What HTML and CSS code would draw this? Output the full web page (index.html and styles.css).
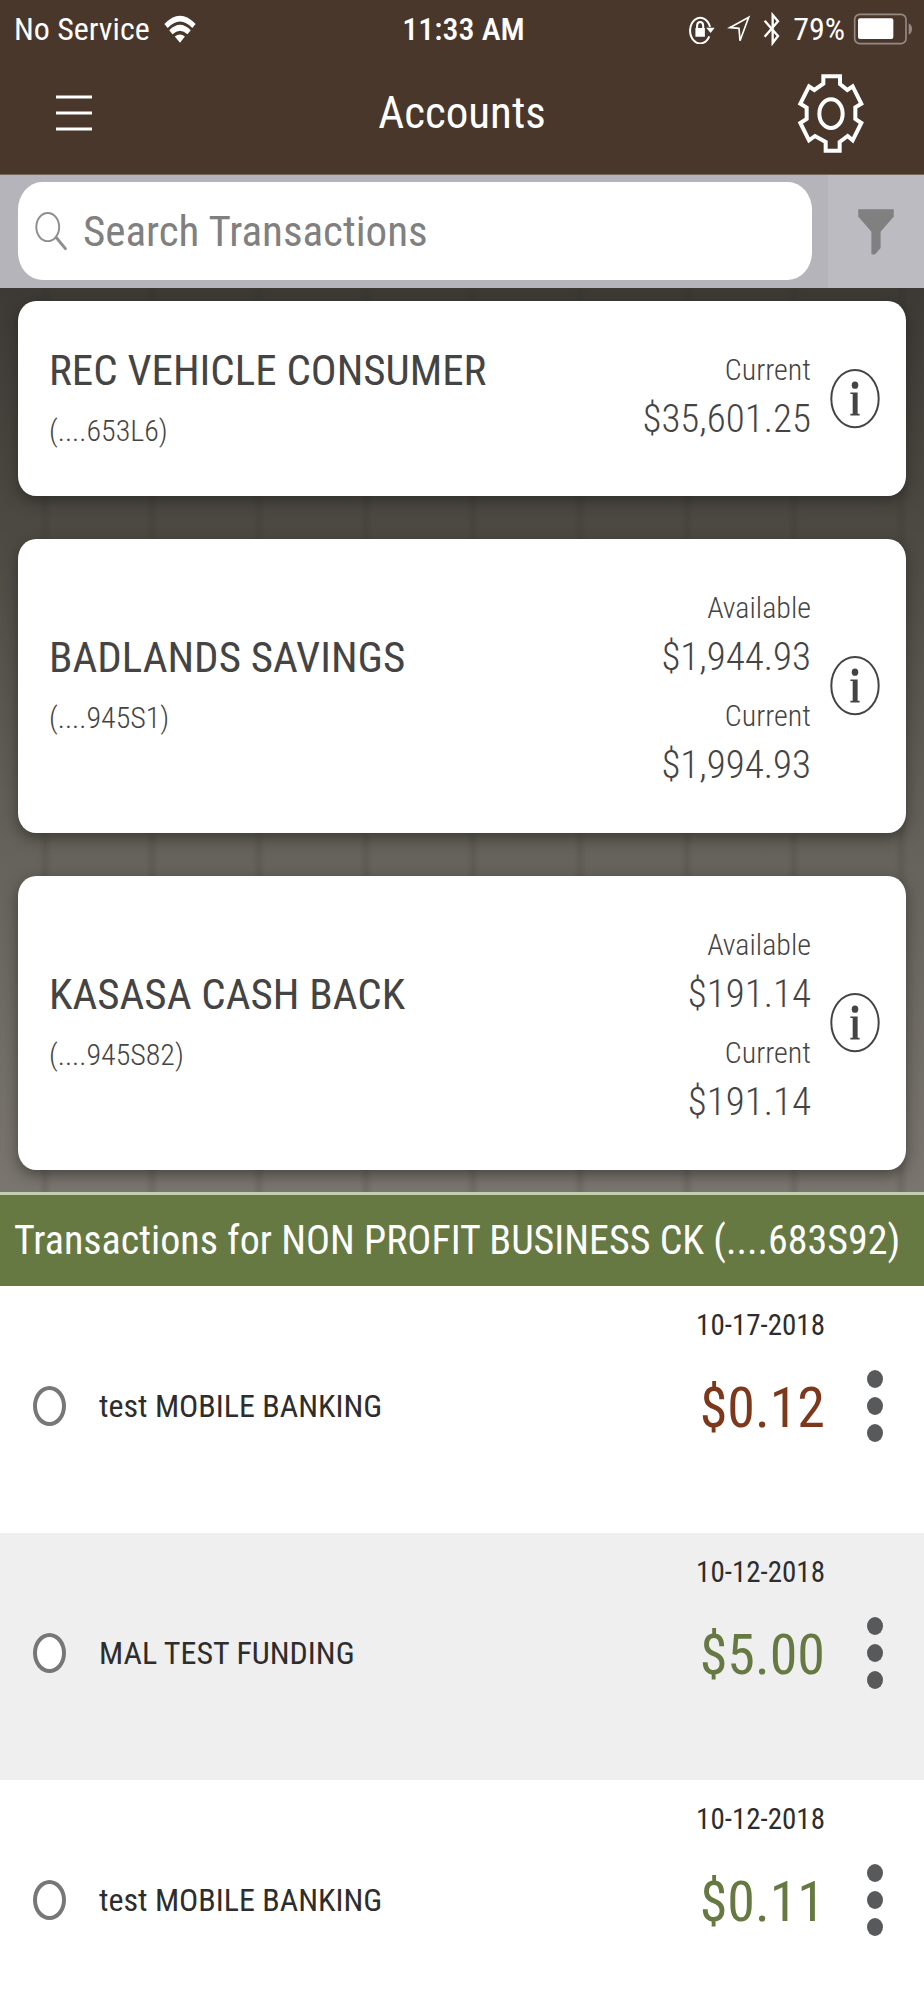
FILE: index.html
```html
<!DOCTYPE html>
<html lang="en">
<head>
<meta charset="utf-8">
<meta name="viewport" content="width=device-width, initial-scale=1">
<title>Accounts</title>
<link rel="stylesheet" href="styles.css">
</head>
<body>
<div class="app">
  <header class="top">
    <div class="status">
      <div class="status-left">
        <span>No Service</span>
        <svg class="wifi" viewBox="487 38 98 86" aria-hidden="true"><path fill="#fff" d="M488 66Q536 14 584 66L574 78Q536 38 498 78ZM503 85Q536 51 569 85L559 97Q536 75 513 97ZM520 104Q536 92 551 104L536 123Z"/></svg>
      </div>
      <span class="time">11:33 AM</span>
      <div class="status-right">
        <svg class="lock" viewBox="678 38 80 88" aria-hidden="true"><path fill="none" stroke="#fff" stroke-width="6" d="M741 104A30 38 0 1 1 743 76M705 82V72Q705 61 714 61Q723 61 723 72V82"/><path fill="#fff" d="M700 79H728V105H700ZM732 78H757L745 94Z"/></svg>
        <svg class="arrow" viewBox="796 42 70 84" aria-hidden="true"><path fill="none" stroke="#fff" stroke-width="5" d="M803 80L860 49L834 119L831 82Z"/></svg>
        <svg class="bluetooth" viewBox="900 34 54 100" aria-hidden="true"><path fill="none" stroke="#fff" stroke-width="7" d="M905 59L945 105L929 126V42L945 61L905 107"/></svg>
        <span>79%</span>
        <svg class="battery" viewBox="1176 34 180 96" aria-hidden="true"><rect x="1181" y="38" width="154" height="88" rx="15" fill="none" stroke="#948a82" stroke-width="5"/><rect x="1191" y="50" width="106" height="62" rx="6" fill="#fff"/><path fill="#948a82" d="M1343 65Q1353 70 1353 82T1343 99Z"/></svg>
      </div>
    </div>
    <div class="nav">
      <button class="icon-button" type="button" aria-label="Menu">
        <svg class="menu" viewBox="0 0 36 36"><path stroke="#fff" stroke-width="3" d="M0 2H36M0 18H36M0 34H36"/></svg>
      </button>
      <h1>Accounts</h1>
      <button class="icon-button settings" type="button" aria-label="Settings">
        <svg class="gear" viewBox="1005 220 204 243"><g fill="none" stroke="#fff" stroke-width="12"><path d="M1084 230H1134V253L1156 271L1172 260L1198 312L1180 323V358L1198 370L1172 422L1157 409L1133 427V453H1091V427L1059 409L1041 422L1015 370L1034 358V324L1015 312L1041 260L1057 271L1084 252Z"/><ellipse cx="1107" cy="342" rx="35" ry="43"/></g></svg>
      </button>
    </div>
  </header>

  <form class="search" role="search">
    <label class="search-box">
      <svg class="glass" viewBox="105 630 98 120" aria-hidden="true"><g fill="none" stroke="#8e8e93"><ellipse cx="144" cy="678" rx="35" ry="43" stroke-width="6"/><path d="M170 710L198 744" stroke-width="9" stroke-linecap="round"/></g></svg>
      <input type="search" placeholder="Search Transactions" aria-label="Search Transactions">
    </label>
    <button class="filter-button" type="button" aria-label="Filter">
      <svg class="filter" viewBox="1191 623 108 140"><path fill="#808080" d="M1191 624H1299V646L1259 692V742L1243 760Q1236 764 1231 759V692L1191 646Z"/></svg>
    </button>
  </form>

  <main class="accounts">
    <article class="card">
      <div class="account"><h2>REC VEHICLE CONSUMER</h2><p>(....653L6)</p></div>
      <dl class="balances"><dt>Current</dt><dd>$35,601.25</dd></dl>
      <button class="info" type="button" aria-label="Account details"><svg viewBox="1102 235 152 182"><ellipse cx="1178" cy="325" rx="72" ry="87" fill="none" stroke="#444" stroke-width="6"/><ellipse cx="1178" cy="284" rx="10" ry="11" fill="#444"/><path fill="#444" d="M1164 306H1186V371H1192V376H1164V371H1171V311H1164Z"/></svg></button>
    </article>
    <article class="card">
      <div class="account"><h2>BADLANDS SAVINGS</h2><p>(....945S1)</p></div>
      <dl class="balances"><dt>Available</dt><dd>$1,944.93</dd><dt>Current</dt><dd>$1,994.93</dd></dl>
      <button class="info" type="button" aria-label="Account details"><svg viewBox="1102 235 152 182"><ellipse cx="1178" cy="325" rx="72" ry="87" fill="none" stroke="#444" stroke-width="6"/><ellipse cx="1178" cy="284" rx="10" ry="11" fill="#444"/><path fill="#444" d="M1164 306H1186V371H1192V376H1164V371H1171V311H1164Z"/></svg></button>
    </article>
    <article class="card">
      <div class="account"><h2>KASASA CASH BACK</h2><p>(....945S82)</p></div>
      <dl class="balances"><dt>Available</dt><dd>$191.14</dd><dt>Current</dt><dd>$191.14</dd></dl>
      <button class="info" type="button" aria-label="Account details"><svg viewBox="1102 235 152 182"><ellipse cx="1178" cy="325" rx="72" ry="87" fill="none" stroke="#444" stroke-width="6"/><ellipse cx="1178" cy="284" rx="10" ry="11" fill="#444"/><path fill="#444" d="M1164 306H1186V371H1192V376H1164V371H1171V311H1164Z"/></svg></button>
    </article>
  </main>

  <section class="transactions">
    <h2 class="section-title">Transactions for NON PROFIT BUSINESS CK (....683S92)</h2>
    <div class="row">
      <label class="pick"><input type="radio" name="transaction"><span>test MOBILE BANKING</span></label>
      <div class="figures"><time datetime="2018-10-17">10-17-2018</time><strong class="debit">$0.12</strong></div>
      <button class="more" type="button" aria-label="More options"><i></i><i></i><i></i></button>
    </div>
    <div class="row">
      <label class="pick"><input type="radio" name="transaction"><span>MAL TEST FUNDING</span></label>
      <div class="figures"><time datetime="2018-10-12">10-12-2018</time><strong>$5.00</strong></div>
      <button class="more" type="button" aria-label="More options"><i></i><i></i><i></i></button>
    </div>
    <div class="row">
      <label class="pick"><input type="radio" name="transaction"><span>test MOBILE BANKING</span></label>
      <div class="figures"><time datetime="2018-10-12">10-12-2018</time><strong>$0.11</strong></div>
      <button class="more" type="button" aria-label="More options"><i></i><i></i><i></i></button>
    </div>
  </section>
</div>
</body>
</html>
```
FILE: styles.css
```css
* { box-sizing: border-box; }

body {
  margin: 0;
  background: #fff;
  font-family: "Roboto Condensed", Roboto, "Liberation Sans", sans-serif;
  color: #444;
}

h1, h2, p, dl, dd { margin: 0; }
h1, h2 { font-weight: 400; }

button {
  padding: 0;
  border: 0;
  background: none;
  font: inherit;
}

svg { display: block; }

.app {
  display: flex;
  flex-direction: column;
  height: 100vh;
  overflow: hidden;
}

.top, .search, .accounts { flex: none; }

/* Status bar and navigation */
.top {
  background: #4a372c;
  color: #fff;
  border-bottom: 1px solid #75695f;
}

.status {
  display: grid;
  grid-template-columns: 1fr auto 1fr;
  align-items: center;
  height: 58px;
  padding: 0 11px 0 14px;
  font-size: 32px;
  line-height: 40px;
}

.status-left, .status-right { display: flex; align-items: center; }
.status-left { gap: 14px; }
.status-right { justify-content: flex-end; gap: 8px; }
.time { font-weight: 500; }
.wifi { width: 32px; height: 28px; }
.lock { width: 27px; height: 30px; }
.arrow { width: 24px; height: 28px; margin-left: 4px; }
.bluetooth { width: 18px; height: 34px; margin: 0 4px; }
.battery { width: 60px; height: 32px; }

.nav {
  display: grid;
  grid-template-columns: 1fr auto 1fr;
  align-items: center;
  height: 116px;
  padding: 0 53px 6px;
}

.nav h1 { font-size: 45px; line-height: 56px; }
.icon-button { display: grid; place-items: center; justify-self: start; min-width: 42px; }
.settings { justify-self: end; }
.menu { width: 36px; height: 36px; }
.gear { width: 80px; height: 81px; }

/* Search */
.search {
  display: flex;
  height: 113px;
  background: #b5b4bb;
}

.search-box {
  flex: 1;
  display: flex;
  align-items: center;
  gap: 16px;
  margin: 7px 16px 8px 18px;
  padding: 0 18px 0 17px;
  border-radius: 24px / 28px;
  background: #fff;
}

.glass { flex: none; width: 32px; height: 40px; }

.search-box input {
  flex: 1;
  min-width: 0;
  padding: 0;
  border: 0;
  outline: 0;
  background: none;
  font: inherit;
  font-size: 43px;
  line-height: 56px;
  appearance: none;
}

.search-box input::placeholder { color: #808080; opacity: 1; }

.filter-button {
  display: grid;
  place-items: center;
  width: 96px;
  background: #bcbbc2;
}

.filter { width: 36px; height: 46px; }

/* Account cards */
.accounts {
  display: flex;
  flex-direction: column;
  gap: 43px;
  padding: 13px 18px 22px;
  background:
    repeating-linear-gradient(90deg, transparent 0 38px, rgba(40, 34, 30, 0.12) 45px, transparent 52px 107px),
    linear-gradient(#3d3a35, #4d4a44 28%, #65615b 62%, #7a756f);
}

.card {
  display: flex;
  align-items: center;
  min-height: 195px;
  padding: 43px 26px 43px 31px;
  border-radius: 18px / 20px;
  background: #fff;
  box-shadow: 0 5px 14px rgba(25, 25, 20, 0.5);
}

.account { flex: 1; }
.account h2 { font-size: 43px; line-height: 46px; }
.account p { margin-top: 18px; font-size: 30px; font-weight: 300; line-height: 40px; }
.balances { align-self: flex-start; padding-top: 2px; font-weight: 300; text-align: right; }
.balances dt { font-size: 30px; line-height: 48px; }
.balances dd { font-size: 39px; line-height: 50px; }
.balances dd + dt { margin-top: 10px; }
.info { margin-left: 19px; }
.info svg { width: 50px; height: 60px; }

/* Transactions */
.transactions { flex: 1; min-height: 0; }

.section-title {
  height: 94px;
  padding: 0 14px;
  border-top: 3px solid #c3cfab;
  background: #667943;
  color: #fff;
  font-size: 40px;
  line-height: 92px;
  white-space: nowrap;
}

.row {
  display: flex;
  align-items: flex-start;
  height: 247px;
  padding: 22px 41px 0 33px;
  background: #fff;
}

.row:nth-child(odd) { background: #efefef; }

.pick {
  flex: 1;
  display: flex;
  align-items: center;
  gap: 33px;
  height: 196px;
  color: #2d2d2d;
  font-size: 32px;
  line-height: 40px;
}

.pick input {
  appearance: none;
  width: 33px;
  height: 40px;
  margin: 0;
  border: 4px solid #777;
  border-radius: 50%;
  background: #fff;
}

.figures { display: flex; flex-direction: column; align-items: flex-end; gap: 30px; }
.figures time { color: #2d2d2d; font-size: 29px; line-height: 34px; }
.figures strong { color: #667943; font-size: 56px; font-weight: 400; line-height: 72px; }
.figures .debit { color: #7d371b; }

.more {
  display: flex;
  flex-direction: column;
  align-items: center;
  justify-content: center;
  gap: 9px;
  height: 196px;
  margin-left: 42px;
}

.more i { width: 16px; height: 18px; border-radius: 50%; background: #58595b; }
```
